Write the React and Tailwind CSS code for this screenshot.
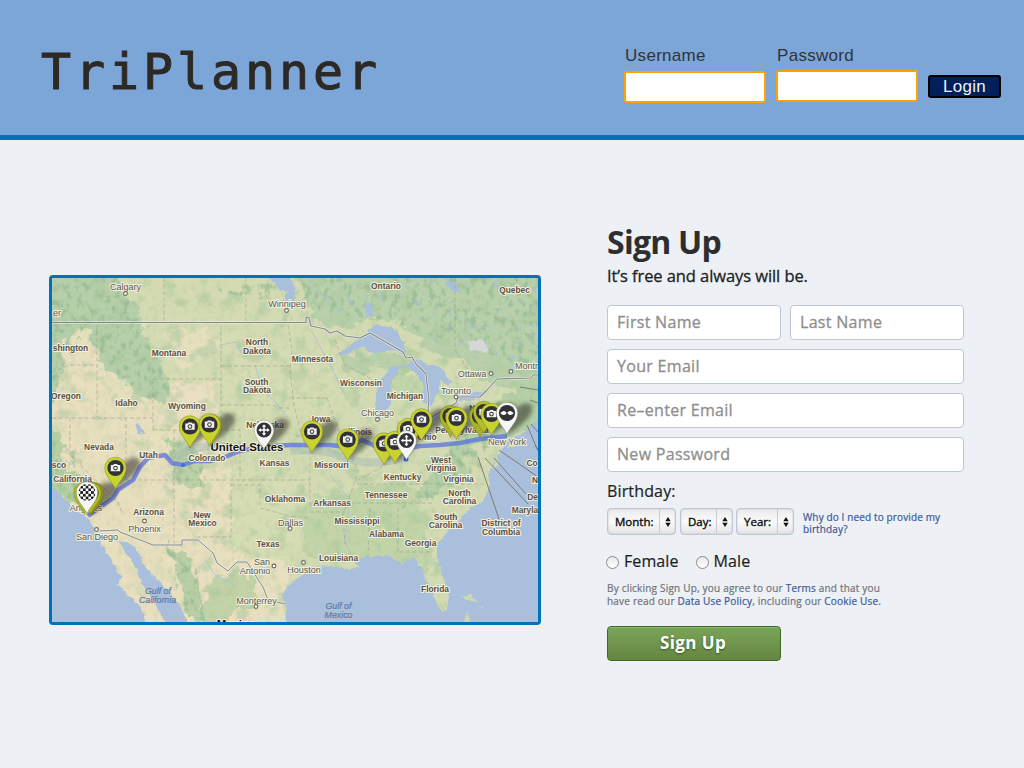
import React from "react";

const SANS = "font-['Open_Sans','Noto_Sans',sans-serif]";

const stateLabels = [
  ["shington", 70.5, 351], ["Montana", 169, 356], ["North", 257, 345], ["Dakota", 257, 353.5],
  ["South", 256.5, 385], ["Dakota", 257, 392.5], ["Idaho", 126.5, 405.5], ["Wyoming", 187, 408.5],
  ["Oregon", 66, 398.5], ["Nebraska", 265, 427.5], ["Nevada", 99, 449.5], ["Minnesota", 312.5, 362],
  ["Ontario", 386, 289], ["Quebec", 514.5, 292.5], ["Wisconsin", 361, 386], ["Michigan", 405, 398.5],
  ["Iowa", 321, 422], ["Illinois", 359, 434.5], ["Ohio", 427, 439.5], ["N", 472, 410.5], ["Pennsylvania", 462, 432.5],
  ["Utah", 148.5, 458], ["Colorado", 207, 460.5], ["Kansas", 274.5, 465.5], ["sco", 59, 467.5],
  ["California", 72.5, 481.5], ["Arizona", 148.5, 515], ["New", 202, 517.5], ["Mexico", 202.5, 526],
  ["Oklahoma", 285, 501.5], ["Texas", 268, 547], ["Missouri", 331.5, 468], ["Arkansas", 332, 505.5],
  ["Kentucky", 402.5, 480], ["Tennessee", 386, 497.5], ["West", 441, 462.5], ["Virginia", 441, 470.5],
  ["Virginia", 458.5, 481.5], ["North", 459.5, 496], ["Carolina", 459.5, 504], ["South", 445.5, 519.5],
  ["Carolina", 445.5, 527.5], ["Mississippi", 357, 523.5], ["Alabama", 386.5, 537], ["Georgia", 420.5, 546],
  ["Louisiana", 338.5, 560.5], ["Florida", 435, 592], ["District of", 501, 526], ["Columbia", 501, 534.5],
  ["Co", 532, 466], ["N", 535, 482.5], ["De", 532.5, 499.5], ["Maryla", 525, 512.5],
];

const cityLabels = [
  ["Calgary", 125.5, 290, 125.5, 293.5], ["Winnipeg", 287, 306.5, 286.5, 310.5], ["er", 57, 315.5],
  ["Ottawa", 472, 377, 491, 373.5], ["Montr", 526.5, 369, 511, 371.5], ["Toronto", 456, 393.5, 456, 397],
  ["Chicago", 377.5, 416, 377.5, 419.5], ["New York", 507, 444.5], ["Phoenix", 144.5, 531.5, 144.5, 521],
  ["San Diego", 97, 540, 96.5, 529.5], ["Angeles", 86, 511], ["Dallas", 290.5, 525.5, 290, 528.5],
  ["San", 262, 565], ["Antonio", 255, 574, 274, 566], ["Houston", 304, 572.5, 303.5, 562.5],
  ["Monterrey", 256.5, 604, 256, 606.5],
];

const stateLines =
  "M164 278V323M246 278V323M97 325V417M52 418H153M153 380V430M153 379H221M221 325V430M221 366H290M221 405H272L280 408L292 408M70 418V455L118 502L122 512M126 418V480M125 480H310M174 430V545M153 430H240V480M231 483V537H198M231 485H260V508L290 516L308 518M288 325L292 350L290 370L294 405L300 430L306 448M290 398H327M296 436L325 437M310 450V510M310 512H345M357 484H487M350 503H433M370 508L368 557M398 508V552H430M343 515L345 545M327 398L335 420L345 445L358 470L352 490L343 515M398 420V447L385 465L358 480M424 418V445M448 412V434H486M455 278V350L468 370M335 340L345 365L365 375L376 383M52 372L70 365H95";

const northBorder =
  "M52 322.5H306V317L309 318L311 326L325 329L330 333L337 331L345 336L360 338L370 333L403 352L406 358L412 357L416 364L426 374L429 400L428 408L430 418L456 403L458 397H480L487 390L497 379L531 378L533 375H538";

const southBorder = "M100 531L118 530L120 532L153 545H182V540H198L213 553L217 563L228 571L237 562H247L257 578L263 587L268 600L285 604";

function Camera() {
  return (
    <g>
      <path d="M-4.7 -3h2.300l.8-1.100h3.200l.8 1.100h2.300v6.300h-9.400z" fill="#f2f2f2" />
      <circle r="2.300" fill="#333" cy=".1" />
      <circle r="1.300" cy=".1" fill="#f2f2f2" />
    </g>
  );
}

function Pin({ x, y, kind = "camera", size = 1, edge }) {
  const body = kind === "camera" || kind === "blank" ? "#c9d32f" : "#f5f6f7";
  return (
    <g transform={`translate(${x} ${y}) scale(${size})`}>
      <path
        d="M0 21.5C-1.5 16-10.8 8.5-10.8 0A10.8 10.8 0 0 1 10.8 0C10.8 8.5 1.5 16 0 21.5Z"
        fill={edge || body}
        stroke="#646a20"
        strokeOpacity=".6"
        strokeWidth=".6"
      />
      {kind !== "check" && <circle r="8.1" fill="#333336" />}
      {kind === "camera" && <Camera />}
      {kind === "cross" && (
        <path
          d="M0-6.200L2.300-3.500H.8V-.8H3.500V-2.300L6.200 0L3.500 2.300V.8H.8V3.500H2.300L0 6.200L-2.300 3.500H-.8V.8H-3.500V2.300L-6.200 0L-3.500-2.300V-.8H-.8V-3.500H-2.300Z"
          fill="#fff"
        />
      )}
      {kind === "flags" && (
        <path d="M-6.800-.5Q-5-.3-4.300-1.800Q-2.300-2.800-.3-.3Q-1 2-3.500 1.900Q-6 1.600-6.800-.5ZM6.800-.5Q5-.3 4.300-1.800Q2.300-2.800 .3-.3Q1 2 3.500 1.900Q6 1.600 6.800-.5Z" fill="#fff" />
      )}
      {kind === "check" && <circle r="8.500" fill="url(#checks)" />}
    </g>
  );
}

const shadows = [[190, 448], [210, 446], [210, 446], [264, 451], [312, 453], [348, 461], [384, 464], [395, 464], [408, 450], [421, 441], [452, 438], [456, 439], [482, 436], [491, 436], [507, 436], [507, 436], [115, 490], [88, 515], [92, 515], [88, 515]];

function RouteMap() {
  return (
    <svg viewBox="52 278 486 344" className="block h-[344px] w-[486px]" fontFamily="'Liberation Sans', Arial, sans-serif">
      <defs>
        <filter id="rough" x="-10%" y="-10%" width="120%" height="120%">
          <feTurbulence type="fractalNoise" baseFrequency=".07" numOctaves="4" seed="8" />
          <feDisplacementMap in="SourceGraphic" scale="22" xChannelSelector="R" yChannelSelector="G" />
          <feGaussianBlur stdDeviation=".7" />
        </filter>
        <filter id="coast" x="-5%" y="-5%" width="110%" height="110%">
          <feTurbulence type="fractalNoise" baseFrequency=".16" numOctaves="3" seed="3" />
          <feDisplacementMap in="SourceGraphic" scale="5" xChannelSelector="R" yChannelSelector="G" />
        </filter>
        <filter id="speckle" x="0" y="0" width="100%" height="100%" colorInterpolationFilters="sRGB">
          <feTurbulence type="fractalNoise" baseFrequency=".055" numOctaves="5" seed="21" />
          <feColorMatrix values="0 0 0 0 .68  0 0 0 0 .79  0 0 0 0 .62  5 0 0 0 -2.6" result="n" />
          <feComposite in="n" in2="SourceGraphic" operator="in" />
        </filter>
        <filter id="relief" x="0" y="0" width="100%" height="100%" colorInterpolationFilters="sRGB">
          <feTurbulence type="fractalNoise" baseFrequency=".17 .12" numOctaves="4" seed="5" result="t" />
          <feColorMatrix in="t" values="0 0 0 0 .54  0 0 0 0 .70  0 0 0 0 .56  0 4 0 0 -2" result="n" />
          <feComposite in="n" in2="SourceGraphic" operator="in" />
        </filter>
        <filter id="ponds" x="0" y="0" width="100%" height="100%" colorInterpolationFilters="sRGB">
          <feTurbulence type="fractalNoise" baseFrequency=".13" numOctaves="3" seed="33" />
          <feColorMatrix values="0 0 0 0 .64  0 0 0 0 .75  0 0 0 0 .86  0 0 12 0 -8" result="n" />
          <feComposite in="n" in2="SourceGraphic" operator="in" />
        </filter>
        <filter id="soft" x="-50%" y="-50%" width="200%" height="200%">
          <feGaussianBlur stdDeviation="2.3" />
        </filter>
        <pattern id="checks" x="-1.350" y="-1.350" width="5.400" height="5.400" patternUnits="userSpaceOnUse">
          <rect width="5.400" height="5.400" fill="#fff" />
          <path d="M0 0h2.700v2.700H0zM2.700 2.700h2.700v2.700H2.700z" fill="#1c1c1c" />
        </pattern>
      </defs>

      <rect x="52" y="278" width="486" height="344" fill="#d4dbb3" />
      <g filter="url(#rough)">
        <path d="M40 335L100 330L150 325L220 330L215 430L250 500L290 560L280 640H130L60 500L40 440Z" fill="#e8dfbf" />
        <path d="M155 430L235 420L330 420L335 400L300 350L225 325L150 320L130 360L150 385L220 380Z" fill="#d5dbb3" />
        <path d="M230 470L300 480L300 560L260 560L230 540Z" fill="#d6dcb3" />
        <path d="M40 270H112L135 310L150 345L170 385L165 410L145 395L125 390L100 360L85 325L68 345L55 395L40 400Z" fill="#b6cfaa" />
        <path d="M40 430L60 435L70 470L90 500L80 510L40 480Z" fill="#b7cfa3" />
        <path d="M300 270H550V395L490 385L470 365L430 350L400 325L370 320L330 330L312 315Z" fill="#b9d0ab" />
        <path d="M340 355L400 352L415 368L380 370L345 372Z" fill="#b9d0a9" />
        <path d="M400 368L422 380L425 395L405 400L392 395Z" fill="#c2d6aa" />
        <path d="M165 440L195 440L205 475L200 490L180 485L172 465Z" fill="#bdd1a6" />
        <path d="M530 380L545 390V430L500 440L470 450L460 480L420 500L405 515L400 500L440 470L460 430L500 400Z" fill="#b5cfa6" />
        <path d="M305 500L400 480L425 495L430 545L440 580L425 570L370 560L305 560Z" fill="#c2d4a8" />
        <path d="M165 540L185 555L200 590L210 625L190 620L178 580Z" fill="#b9cfa5" />
        <path d="M210 580L245 570L262 600L235 615L225 630L205 630Z" fill="#c3d3a8" />
        <path d="M102 380L125 375L133 400L105 402Z" fill="#e6dfbd" />
        <path d="M165 330L205 330L225 345L185 370L165 350Z" fill="#e5dfbe" />
        <path d="M177 385L215 390L218 418L160 425Z" fill="#eadfc1" />
      </g>
      <path d="M52 278H538V622H200L170 500L120 420H52Z" filter="url(#speckle)" opacity=".55" />
      <path d="M52 420H120L170 500L200 622H100L52 500Z" filter="url(#speckle)" opacity=".2" />
      <path d="M52 278H118L145 330L172 395L150 400L100 360L85 325L52 400ZM52 440L80 450L90 515L52 485ZM165 440L200 445L205 490L178 485ZM165 545L195 560L205 622H185ZM500 400L440 460L400 510L430 500L480 470ZM210 290L300 278H538V370L400 325Z" filter="url(#relief)" opacity=".5" />
      <rect x="52" y="278" width="486" height="344" filter="url(#relief)" opacity=".12" />
      <path d="M300 278H538V365L470 365L400 325L310 322L290 322Z" filter="url(#ponds)" opacity=".6" />

      <g fill="#a9bfdc" filter="url(#coast)">
        <path d="M40 470L52 487L65 498L77 512L87 517L95 532L100 542L112 562L122 577L118 585L128 595L140 605L148 630H40Z" />
        <path d="M118 540L127 542L135 548L142 562L155 578L170 592L180 605L190 630H170L160 612L150 595L143 585L137 568L127 555Z" />
        <path d="M284 630L287 608L283 595L288 585L300 577L307 572L317 566L333 567L350 569L360 567L353 560L370 557L387 555L402 563L413 558L422 567L425 578L433 592L437 605L442 612L447 610L449 595L443 578L437 558L437 545L447 532L460 520L470 508L483 502L490 485L488 475L494 462L501 450L510 439L523 433L533 425L550 405V630Z" />
        <path d="M335 355L350 345L362 337L373 325L393 328L405 342L405 354L387 350L375 354L360 347L348 354Z" />
        <path d="M377 419L375 403L379 383L390 368L403 364L397 373L391 383L390 403L387 415Z" />
        <path d="M403 366L415 360L440 367L453 383L447 386L440 380L438 393L430 407L422 401L424 384L417 374Z" />
        <path d="M429 421L440 409L457 403L459 407L435 421Z" />
        <path d="M455 399L463 393L487 391L480 399L465 401Z" />
        <path d="M270 278L279 292L287 290L285 300L294 304L296 292L290 278ZM364 305L372 304L373 314L366 316ZM443 278L447 287L462 294L455 283ZM135 423L142 426L145 434L138 433Z" />
      </g>
      <g fill="#cdd8b1" filter="url(#coast)">
        <path d="M461 596L471 594L478 604L470 601ZM467 612L471 622H465ZM482 604L484 608L481 607ZM505 448L524 438L514 446ZM492 470L497 456L499 464Z" />
      </g>
      <path d="M468 342L484 340L489 350L485 354L476 350L470 351Z" fill="#d5d8d7" filter="url(#coast)" />
      <path d="M221 345L235 342L242 353L250 350M255 365L262 390L278 405L288 418M311 330L330 365L345 395M205 560L215 575L235 585M330 475L350 500L345 540L352 558" fill="none" stroke="#a7bfd6" strokeWidth=".8" />

      <path d={stateLines} fill="none" stroke="#9f9d8b" strokeWidth=".8" strokeDasharray="4 2.5" opacity=".7" />
      <g fill="none" strokeLinejoin="round">
        <path d={northBorder} stroke="#eef0e5" strokeWidth="2.6" opacity=".75" />
        <path d={northBorder} stroke="#85868a" strokeWidth="1.1" />
        <path d={southBorder} stroke="#eef0e5" strokeWidth="2.4" opacity=".7" />
        <path d={southBorder} stroke="#85868a" strokeWidth="1" />
        <path d="M175 458Q195 444 225 446M290 451Q325 448 345 458Q375 468 407 456" stroke="#8fa5b5" strokeWidth="8" opacity=".3" />
        <path d="M88 516L113 498L118 490L133 480L140 467L148 458L165 455L172 463L183 465L195 461L210 461L225 457L240 451L260 447L290 445H330L348 447L362 440L375 446L400 450L420 446L440 445L460 443L480 439L507 436" stroke="#566de0" strokeWidth="4.4" opacity=".72" />
      </g>
      <circle cx="183" cy="465" r="2" fill="#3f6fe8" />
      <circle cx="406" cy="459" r="2.5" fill="#3556e0" />
      <path d="M499 450L538 477M494 458L526 494M485 458L528 504M478 457L499 519M520 387L538 390M530 400L538 403M527 425L538 451M531 424L538 432M535 445L538 450" stroke="#777469" strokeWidth=".9" fill="none" />

      <g fill="#5d5044" textAnchor="middle" stroke="#f1f1df" strokeWidth="2" strokeLinejoin="round" paintOrder="stroke">
        {stateLabels.map(([t, x, y], i) => (
          <text key={i} x={x} y={y} fontWeight="bold" fontSize="8.400">{t}</text>
        ))}
        {cityLabels.map(([t, x, y, cx, cy], i) => (
          <g key={i}>
            <text x={x} y={y} fontSize="9" fill="#5a5652">{t}</text>
            {cx && <circle cx={cx} cy={cy} r="1.900" fill="#fff" stroke="#6b6862" strokeWidth="1.100" paintOrder="normal" />}
          </g>
        ))}
        <text x="247" y="450.500" fontSize="11.400" fontWeight="bold" fill="#111">United States</text>
        <text x="236" y="627.500" fontSize="11.400" fontWeight="bold" fill="#111">Mexico</text>
      </g>
      <g fontSize="8.800" fontStyle="italic" fill="#5f7ba5" stroke="#5f7ba5" strokeWidth=".2" textAnchor="middle">
        <text x="158" y="594">Gulf of</text>
        <text x="157.500" y="602.500">California</text>
        <text x="338.500" y="609">Gulf of</text>
        <text x="338.500" y="617.500">Mexico</text>
      </g>

      <g filter="url(#soft)" fill="#1e1f18" opacity=".5">
        {shadows.map(([x, y], i) => (
          <path key={i} d={`M${x} ${y}l4-19q8-16 18-13q8 5-4 17z`} />
        ))}
      </g>

      <Pin x={190} y={426.5} />
      <Pin x={211} y={425} kind="blank" edge="#a3aa22" />
      <Pin x={209.5} y={424.5} />
      <Pin x={264} y={430} kind="cross" size={0.92} />
      <Pin x={312} y={431.5} />
      <Pin x={347.7} y={439.5} />
      <Pin x={384} y={443.5} />
      <Pin x={395} y={442} />
      <Pin x={408} y={429} />
      <Pin x={406.5} y={440.5} kind="cross" size={0.92} />
      <Pin x={421.5} y={419.5} />
      <Pin x={450.5} y={416} edge="#a9b129" />
      <Pin x={456.5} y={418} />
      <Pin x={480} y={416} edge="#a9b129" />
      <Pin x={484} y={412} edge="#b5bf2b" />
      <Pin x={491.5} y={414} />
      <Pin x={507} y={413} kind="flags" />
      <Pin x={115.5} y={468} />
      <Pin x={93} y={493} kind="blank" edge="#8c921d" />
      <Pin x={90.5} y={493} kind="blank" edge="#b1b92a" />
      <Pin x={84.5} y={493} kind="blank" edge="#b1b92a" />
      <Pin x={87} y={492.5} kind="check" />
    </svg>
  );
}

function Field({ children, className = "" }) {
  return (
    <div className={`flex h-[35px] items-center rounded-[4px] border border-[#bdc7d8] bg-white px-[9px] pb-[2px] text-[16px] tracking-[0.300px] text-[#8e8e8e] [-webkit-text-stroke:0.3px_#8e8e8e] ${className}`}>
      {children}
    </div>
  );
}

function Picker({ label, className }) {
  return (
    <div className={`flex h-[27px] items-stretch rounded-[4px] border border-[#bdc7d8] bg-linear-to-b from-[#ebebeb] via-[#fafafa] to-[#e4e4e4] text-[11.500px] text-[#111] shadow-[inset_0_0_2px_#bbb] [-webkit-text-stroke:0.4px_#111] ${className}`}>
      <span className="flex-1 pl-[7px] leading-[25px] whitespace-nowrap">{label}</span>
      <span className="flex w-[16px] items-center justify-center border-l border-[#c9ccd2]">
        <svg viewBox="0 0 6 10" className="h-[10px] w-[6px]">
          <path d="M3 0L5.700 4.200H.300ZM3 10L.300 5.800H5.700Z" fill="#111" />
        </svg>
      </span>
    </div>
  );
}

function Radio({ label }) {
  return (
    <span className="flex items-center gap-[5px]">
      <span className="h-[13px] w-[13px] rounded-full border border-[#8a8a8a] bg-linear-to-b from-[#e9e9e9] to-white" />
      <span className="relative -top-px">{label}</span>
    </span>
  );
}

export default function App() {
  return (
    <div className="h-[768px] w-[1024px] overflow-hidden bg-[#edf0f5]">
      <header className="flex h-[140px] items-start justify-between border-b-[5px] border-[#0072bc] bg-[#7da6d8] pr-[23px] pl-[41px] font-['Liberation_Sans',Arial,sans-serif]">
        <h1 className="mt-[42px] h-[60px] font-['DejaVu_Sans_Mono',monospace] text-[50px] leading-[60px] tracking-[3.900px] text-[#2d2a26] [-webkit-text-stroke:1px_#2d2a26]">TriPlanner</h1>
        <div className="flex items-start">
          <div className="mt-[45px] w-[142px]">
            <div className="h-[26px] pl-[1px] text-[17px] leading-[22px] tracking-[0.300px] text-[#303338]">Username</div>
            <div className="h-[32px] rounded-[3px] border-2 border-[#ffa200] bg-white" />
          </div>
          <div className="mt-[45px] ml-[10px] w-[142px]">
            <div className="h-[25px] pl-[1px] text-[17px] leading-[22px] tracking-[0.300px] text-[#303338]">Password</div>
            <div className="h-[32px] rounded-[3px] border-2 border-[#ffa200] bg-white" />
          </div>
          <button className="mt-[75px] ml-[10px] h-[23px] w-[73px] rounded-[3px] border-2 border-black bg-[#00205b] pb-[1px] text-[17px] leading-[17px] tracking-[0.300px] text-[#f0f2f6]">Login</button>
        </div>
      </header>

      <main className="flex items-start pl-[49px]">
        <div className="mt-[135px] h-[350px] w-[492px] shrink-0 overflow-hidden rounded-[4px] border-[3px] border-[#0072bc]">
          <RouteMap />
        </div>

        <section className={`mt-[81px] ml-[66px] w-[357px] shrink-0 text-[#1c1e22] ${SANS}`}>
          <h2 className="h-[43px] text-[32px] leading-[42px] font-bold tracking-[-0.750px] text-[#2c2e30]">Sign Up</h2>
          <p className="h-[24px] text-[16.500px] leading-[24px] tracking-[-0.080px] [-webkit-text-stroke:0.3px_#1c1e22]">It’s free and always will be.</p>
          <div className="mt-[17px] flex flex-col gap-[9px]">
            <div className="flex gap-[9px]">
              <Field className="flex-1">First Name</Field>
              <Field className="flex-1">Last Name</Field>
            </div>
            <Field>Your Email</Field>
            <Field>Re–enter Email</Field>
            <Field>New Password</Field>
          </div>
          <div className="mt-[7px] h-[25px] text-[16px] leading-[24px] tracking-[0.150px] [-webkit-text-stroke:0.2px_#1c1e22]">Birthday:</div>
          <div className="mt-[4px] flex items-start">
            <Picker label="Month:" className="w-[69px]" />
            <Picker label="Day:" className="ml-[4px] w-[53px]" />
            <Picker label="Year:" className="ml-[3px] w-[58px]" />
            <p className="ml-[9px] pt-[3px] text-[10px] leading-[12px] tracking-[0.130px] whitespace-nowrap text-[#3b5998] [-webkit-text-stroke:0.2px_#3b5998]">
              Why do I need to provide my<br />birthday?
            </p>
          </div>
          <div className="mt-[15px] -ml-[1px] flex h-[24px] items-center gap-[17px] text-[16px] tracking-[0.100px] [-webkit-text-stroke:0.2px_#1c1e22]">
            <Radio label="Female" />
            <Radio label="Male" />
          </div>
          <p className="mt-[8px] h-[26px] text-[10px] leading-[13px] tracking-[0.200px] whitespace-nowrap text-[#70737a] [-webkit-text-stroke:0.2px_currentColor]">
            By clicking Sign Up, you agree to our <span className="text-[#3b5998]">Terms</span> and that you<br />
            have read our <span className="text-[#3b5998]">Data Use Policy</span>, including our <span className="text-[#3b5998]">Cookie Use.</span>
          </p>
          <button className="mt-[18px] block h-[35px] w-[174px] rounded-[4px] border border-[#3b6e22] bg-linear-to-b from-[#79a557] to-[#668544] pr-[2px] pb-[2px] text-[17px] leading-[31px] font-bold tracking-[0.400px] text-white shadow-[inset_0_1px_0_#8fb872] [text-shadow:0_1px_2px_#33551c]">Sign Up</button>
        </section>
      </main>
    </div>
  );
}
